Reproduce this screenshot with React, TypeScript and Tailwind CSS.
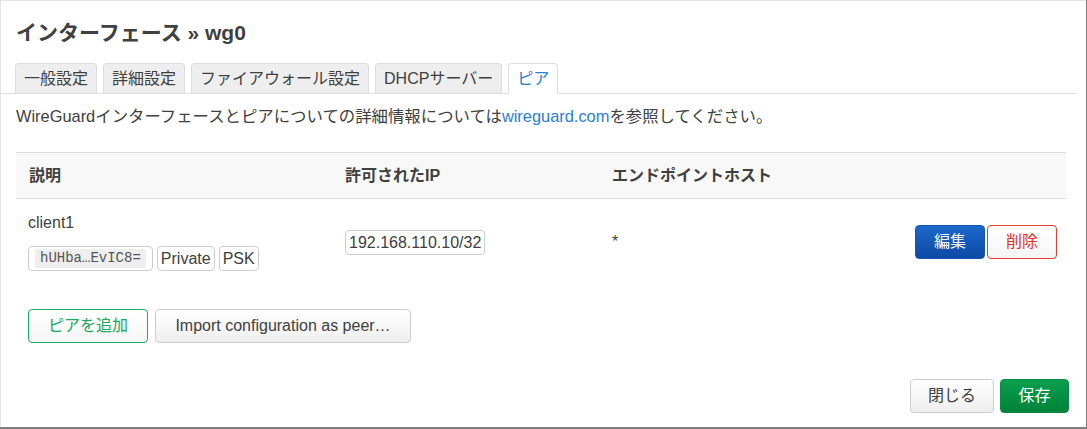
const tabs = [
  { label: "一般設定" },
  { label: "詳細設定" },
  { label: "ファイアウォール設定" },
  { label: "DHCPサーバー" },
  { label: "ピア", active: true },
];

const Badge = ({ children }: { children: React.ReactNode }) => (
  <span className="inline-flex items-center h-[25px] px-[3px] border border-[#ccc] rounded-[4px] bg-white leading-[19px]">
    {children}
  </span>
);

const App = () => {
  return (
    <div className="w-[1087px] h-[429px] bg-[#808080] font-['Liberation_Sans','Noto_Sans_CJK_JP',sans-serif] text-[16px] text-[#404040]">
      <div className="w-[1086px] h-[427px] bg-white border-t border-l border-[#e4e4e4] flex flex-col">
        <h4 className="pl-[15px] pt-[19px] text-[21px] leading-[25px] font-bold">
          インターフェース » wg0
        </h4>

        <ul className="mt-[18px] mr-[9px] pl-[14px] flex gap-[6px] border-b border-[#ddd]">
          {tabs.map((tab, index) => (
            <li
              key={index}
              className={
                tab.active
                  ? "h-[31px] -mb-[1px] px-[8px] flex items-center border border-b-0 border-[#ddd] rounded-t-[4px] bg-white text-[#2a7fd4]"
                  : "h-[30px] px-[8px] flex items-center border border-b-0 border-[#ddd] rounded-t-[4px] bg-[#eee]"
              }>
              {tab.label}
            </li>
          ))}
        </ul>

        <p className="mt-[10px] pl-[15px] text-[16.4px] leading-[24px]">
          WireGuardインターフェースとピアについての詳細情報については
          <a href="#" className="text-[#2a7fd4]">
            wireguard.com
          </a>
          を参照してください。
        </p>

        <div className="mt-[24px] ml-[15px] w-[1050px]">
          <div className="grid grid-cols-[316px_267px_1fr] h-[47px] items-center bg-[#f8f8f8] border-y border-[#ddd] font-bold">
            <div className="pl-[13px]">説明</div>
            <div className="pl-[13px]">許可されたIP</div>
            <div className="pl-[13px]">エンドポイントホスト</div>
          </div>
          <div className="grid grid-cols-[316px_267px_1fr_auto] items-center pt-[12px] pb-[16px]">
            <div className="pl-[12px]">
              <div className="leading-[24px]">client1</div>
              <div className="mt-[11px] flex gap-[4px]">
                <span className="inline-flex items-center h-[25px] px-[6px] border border-[#ccc] rounded-[4px] bg-white">
                  <code className="px-[5px] bg-[#eee] rounded-[2px] text-[14px] leading-[19px] text-[#555] font-['Liberation_Mono',monospace]">
                    hUHba…EvIC8=
                  </code>
                </span>
                <Badge>Private</Badge>
                <Badge>PSK</Badge>
              </div>
            </div>
            <div className="pl-[13px] pt-[2px]">
              <Badge>192.168.110.10/32</Badge>
            </div>
            <div className="pl-[13px] pt-[2px]">*</div>
            <div className="flex gap-[2px] pr-[9px] pt-[2px]">
              <button className="w-[70px] h-[34px] rounded-[4px] border border-[#1458b3] bg-gradient-to-b from-[#1d68cc] to-[#0b4aa3] text-white">
                編集
              </button>
              <button className="w-[70px] h-[34px] rounded-[4px] border border-[#ec3a2a] bg-gradient-to-b from-white to-[#f5f5f5] text-[#e5301e]">
                削除
              </button>
            </div>
          </div>
        </div>

        <div className="mt-[22px] ml-[27px] flex gap-[7px]">
          <button className="w-[120px] h-[34px] rounded-[4px] border border-[#16b064] bg-gradient-to-b from-white to-[#f6f6f6] text-[#19a85e]">
            ピアを追加
          </button>
          <button className="w-[256px] h-[34px] rounded-[4px] border border-[#ccc] bg-gradient-to-b from-white to-[#eee]">
            Import configuration as peer…
          </button>
        </div>

        <div className="mt-[36px] mr-[17px] flex justify-end gap-[6px]">
          <button className="w-[84px] h-[34px] rounded-[4px] border border-[#ccc] bg-gradient-to-b from-white to-[#eee]">
            閉じる
          </button>
          <button className="w-[69px] h-[34px] rounded-[4px] border border-[#0a8a42] bg-gradient-to-b from-[#0a9e4c] to-[#00833a] text-white">
            保存
          </button>
        </div>
      </div>
    </div>
  );
};

export default App;
